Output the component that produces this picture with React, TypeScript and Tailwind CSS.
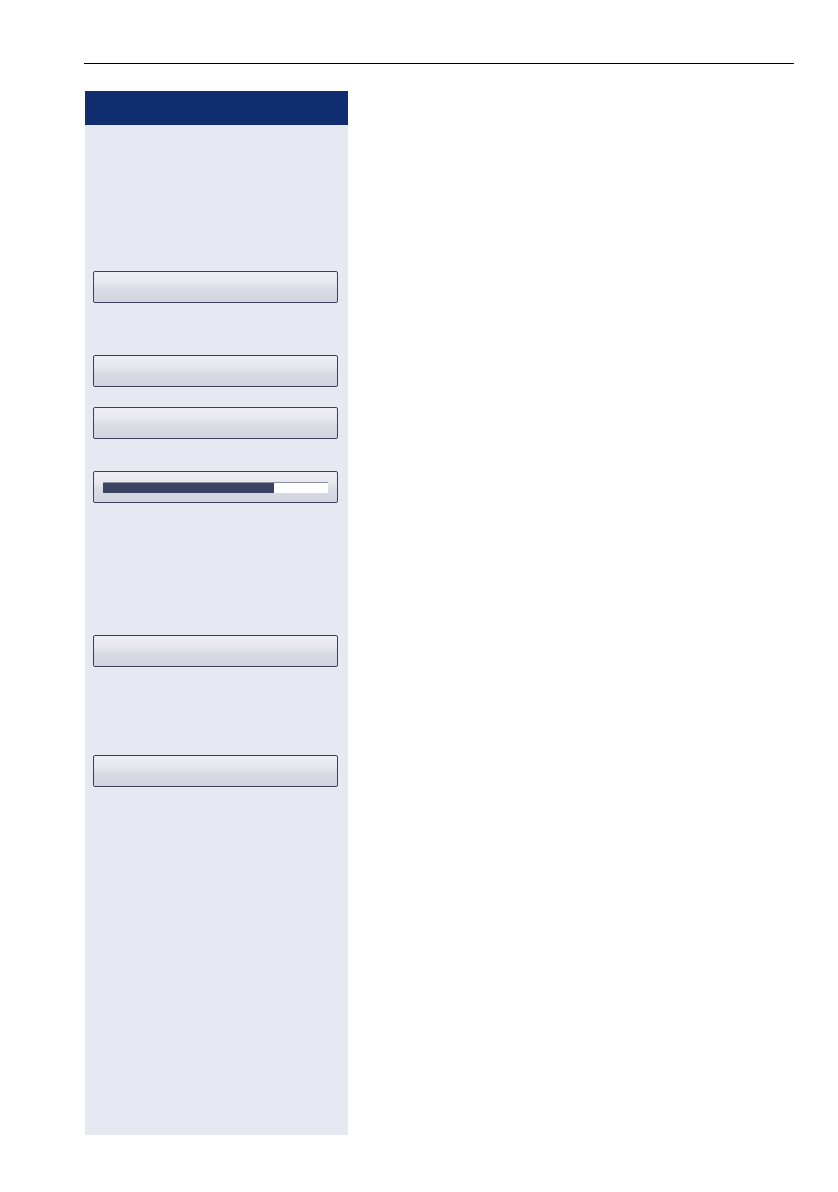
export default function App() {
  const gaps = ['mt-[146px]', 'mt-[52px]', 'mt-[20px]', 'mt-[32px]', 'mt-[132px]', 'mt-[88px]']

  return (
    <div className="w-[838px] h-[1192px] bg-white relative font-['Liberation_Sans',sans-serif]">
      <div className="pt-[63px] pl-[84px]">
        <div className="w-[710px] h-px bg-black" />
      </div>
      <div className="ml-[85px] mt-[27px] w-[263px] h-[1044px] bg-[#e6e9f2]">
        <div className="h-[34px] bg-[#0f2d6f]" />
        <div className="px-[8px] pr-[10px]">
          {gaps.map((g, i) => (
            <Button key={i} className={g} progress={i === 3 ? 76 : undefined} />
          ))}
        </div>
      </div>
    </div>
  )
}

function Button({ className, progress }: { className: string; progress?: number }) {
  return (
    <div
      className={`${className} h-[32px] rounded-[2px] border border-[#3b3f5e] bg-[linear-gradient(to_bottom,#eceef3_0%,#e5e7ed_38%,#d8dbe2_58%,#d2d5de_100%)] flex items-center px-[9px]`}
    >
      {progress !== undefined && (
        <div className="w-full h-[11px] bg-white border-t border-[#8a8e9e] mt-[1px]">
          <div className="h-full bg-[#3c4262]" style={{ width: `${progress}%` }} />
        </div>
      )}
    </div>
  )
}
